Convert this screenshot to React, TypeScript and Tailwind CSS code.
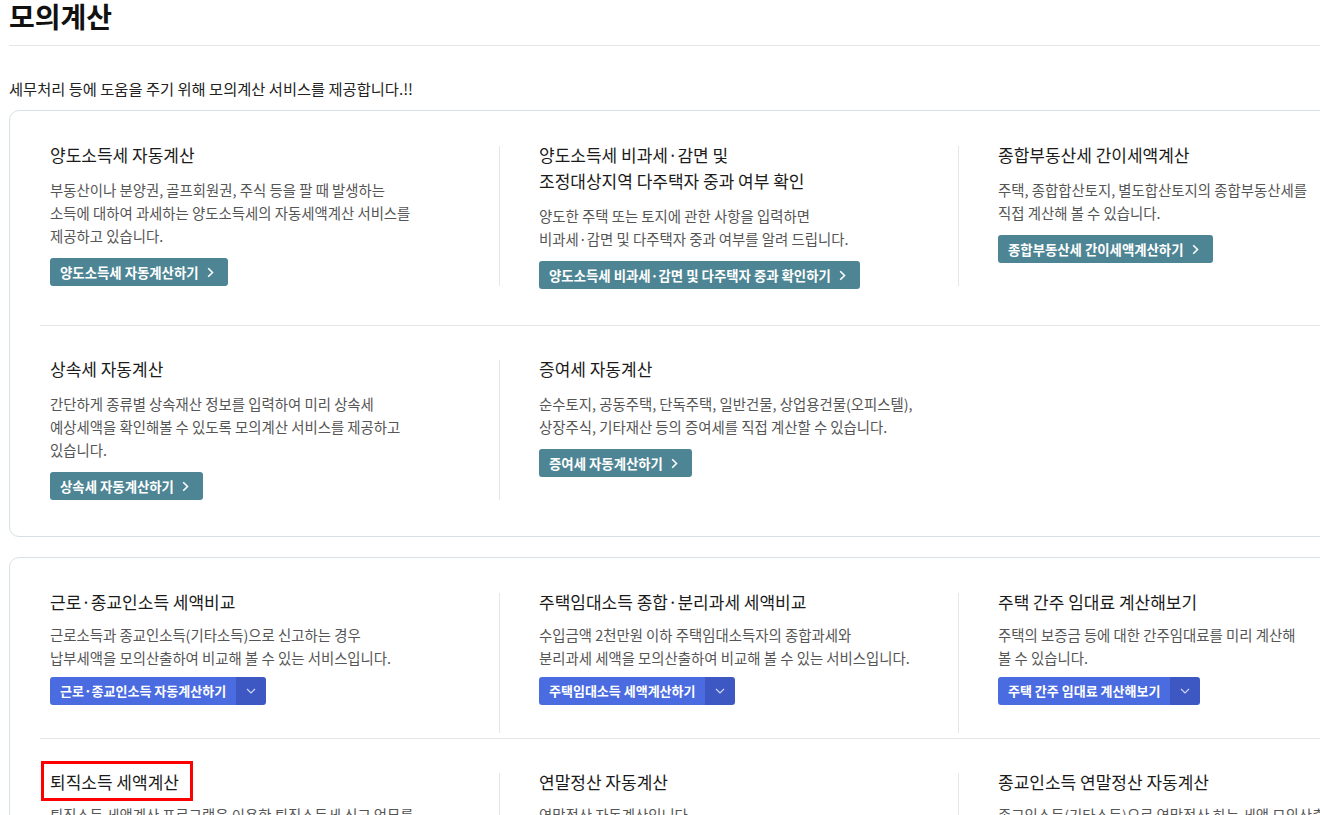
import React from "react";

type Item = {
  title: string[];
  desc: string[];
  button: string;
  split?: boolean;
  highlight?: boolean;
};

const box1: Item[][] = [
  [
    {
      title: ["양도소득세 자동계산"],
      desc: [
        "부동산이나 분양권, 골프회원권, 주식 등을 팔 때 발생하는",
        "소득에 대하여 과세하는 양도소득세의 자동세액계산 서비스를",
        "제공하고 있습니다.",
      ],
      button: "양도소득세 자동계산하기",
    },
    {
      title: ["양도소득세 비과세·감면 및", "조정대상지역 다주택자 중과 여부 확인"],
      desc: [
        "양도한 주택 또는 토지에 관한 사항을 입력하면",
        "비과세·감면 및 다주택자 중과 여부를 알려 드립니다.",
      ],
      button: "양도소득세 비과세·감면 및 다주택자 중과 확인하기",
    },
    {
      title: ["종합부동산세 간이세액계산"],
      desc: [
        "주택, 종합합산토지, 별도합산토지의 종합부동산세를",
        "직접 계산해 볼 수 있습니다.",
      ],
      button: "종합부동산세 간이세액계산하기",
    },
  ],
  [
    {
      title: ["상속세 자동계산"],
      desc: [
        "간단하게 종류별 상속재산 정보를 입력하여 미리 상속세",
        "예상세액을 확인해볼 수 있도록 모의계산 서비스를 제공하고",
        "있습니다.",
      ],
      button: "상속세 자동계산하기",
    },
    {
      title: ["증여세 자동계산"],
      desc: [
        "순수토지, 공동주택, 단독주택, 일반건물, 상업용건물(오피스텔),",
        "상장주식, 기타재산 등의 증여세를 직접 계산할 수 있습니다.",
      ],
      button: "증여세 자동계산하기",
    },
  ],
];

const box2: Item[][] = [
  [
    {
      title: ["근로·종교인소득 세액비교"],
      desc: [
        "근로소득과 종교인소득(기타소득)으로 신고하는 경우",
        "납부세액을 모의산출하여 비교해 볼 수 있는 서비스입니다.",
      ],
      button: "근로·종교인소득 자동계산하기",
      split: true,
    },
    {
      title: ["주택임대소득 종합·분리과세 세액비교"],
      desc: [
        "수입금액 2천만원 이하 주택임대소득자의 종합과세와",
        "분리과세 세액을 모의산출하여 비교해 볼 수 있는 서비스입니다.",
      ],
      button: "주택임대소득 세액계산하기",
      split: true,
    },
    {
      title: ["주택 간주 임대료 계산해보기"],
      desc: [
        "주택의 보증금 등에 대한 간주임대료를 미리 계산해",
        "볼 수 있습니다.",
      ],
      button: "주택 간주 임대료 계산해보기",
      split: true,
    },
  ],
  [
    {
      title: ["퇴직소득 세액계산"],
      desc: ["퇴직소득 세액계산 프로그램을 이용한 퇴직소득세 신고 업무를"],
      button: "퇴직소득 세액계산하기",
      highlight: true,
    },
    {
      title: ["연말정산 자동계산"],
      desc: ["연말정산 자동계산입니다."],
      button: "연말정산 자동계산하기",
    },
    {
      title: ["종교인소득 연말정산 자동계산"],
      desc: ["종교인소득(기타소득)으로 연말정산 하는 세액 모의산출 서비스입니다."],
      button: "종교인소득 연말정산 자동계산하기",
    },
  ],
];

const ChevronRight = () => (
  <svg width="7" height="11" viewBox="0 0 7 11" fill="none">
    <path d="M1.2 1.2 5.5 5.5 1.2 9.8" stroke="white" strokeWidth="1.6" />
  </svg>
);

const ChevronDown = () => (
  <svg width="10" height="6" viewBox="0 0 10 6" fill="none">
    <path d="M1 1 5 5 9 1" stroke="#cdd6f7" strokeWidth="1.2" />
  </svg>
);

const CalcButton: React.FC<{ item: Item; tight?: boolean }> = ({ item, tight }) => {
  if (item.split) {
    return (
      <div
        className={`${tight ? "mt-[8px]" : "mt-[11px]"} flex h-[28px] w-fit text-[13px] font-bold text-white`}
      >
        <span className="flex items-center rounded-l-[3px] bg-[#4a6ce0] px-[10px] whitespace-nowrap">
          {item.button}
        </span>
        <span className="flex w-[30px] items-center justify-center rounded-r-[3px] bg-[#3d57c3]">
          <ChevronDown />
        </span>
      </div>
    );
  }
  return (
    <div
      className={`${tight ? "mt-[8px]" : "mt-[11px]"} flex h-[28px] w-fit items-center gap-[8px] rounded-[3px] bg-[#4d8594] pr-[14px] pl-[10px] text-[13.4px] font-bold whitespace-nowrap text-white`}
    >
      {item.button}
      <ChevronRight />
    </div>
  );
};

const Card: React.FC<{ item: Item; tight?: boolean }> = ({ item, tight }) => (
  <div>
    {item.highlight ? (
      <h3 className="flex text-[17px] leading-[26px] text-[#1b1b1b]">
        <span className="-mt-[8px] -mb-[6px] -ml-[9px] border-[3px] border-[#ff0000] pt-[5px] pr-[11px] pb-[3px] pl-[6px] whitespace-nowrap">
          {item.title[0]}
        </span>
      </h3>
    ) : (
      <h3 className="text-[17px] leading-[26px] text-[#1b1b1b]">
        {item.title.map((t) => (
          <div key={t} className="whitespace-nowrap">
            {t}
          </div>
        ))}
      </h3>
    )}
    <div
      className={`${tight ? "mt-[8px]" : "mt-[10px]"} text-[14.4px] leading-[23px] text-[#555]`}
    >
      {item.desc.map((d) => (
        <div key={d} className="whitespace-nowrap">
          {d}
        </div>
      ))}
    </div>
    <CalcButton item={item} tight={tight} />
  </div>
);

const Row: React.FC<{
  items: Item[];
  first?: boolean;
  pb: string;
  tight?: boolean;
}> = ({ items, first, pb, tight }) => (
  <div
    className={`grid grid-cols-[459px_459px_459px] items-start ${
      first ? "pt-[31px]" : "border-t border-[#e4e6e9] pt-[30px]"
    } ${pb}`}
  >
    {items.map((item, i) =>
      i === 0 ? (
        <div key={i} className="pl-[10px]">
          <Card item={item} tight={tight} />
        </div>
      ) : (
        <div key={i} className="flex items-start">
          <div className="mt-[4px] h-[140px] w-px shrink-0 bg-[#e4e6e9]" />
          <div className="pl-[39px]">
            <Card item={item} tight={tight} />
          </div>
        </div>
      )
    )}
  </div>
);

export default function App() {
  return (
    <div className="h-[815px] w-[1320px] overflow-hidden bg-white font-['Malgun_Gothic','Noto_Sans_CJK_KR',sans-serif] text-[#222]">
      <div className="w-[1500px] pl-[9px]">
        <h1 className="text-[28px] leading-[32px] font-bold text-[#111]">모의계산</h1>
        <div className="mt-[13px] border-t border-[#e3e5e8]" />
        <p className="mt-[31px] text-[15.3px] leading-[22px] text-[#222]">
          세무처리 등에 도움을 주기 위해 모의계산 서비스를 제공합니다.!!
        </p>

        <div className="mt-[11px] rounded-[10px] border border-[#d6e1e7] pl-[30px]">
          <Row items={box1[0]} first pb="pb-[36px]" />
          <Row items={box1[1]} pb="pb-[36px]" />
        </div>

        <div className="mt-[20px] rounded-[10px] border border-[#d6e1e7] pl-[30px]">
          <div className="h-[180px]">
            <Row items={box2[0]} first pb="pb-0" tight />
          </div>
          <Row items={box2[1]} pb="pb-[36px]" tight />
        </div>
      </div>
    </div>
  );
}
